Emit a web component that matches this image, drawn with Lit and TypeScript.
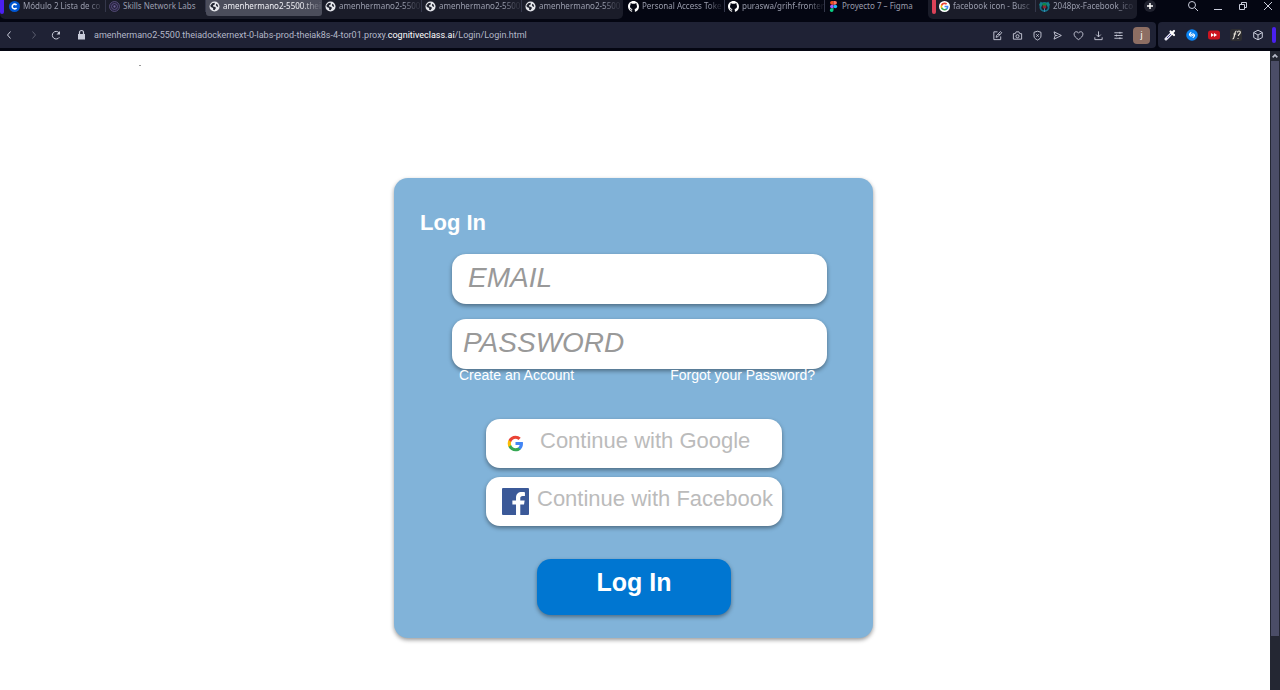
import { LitElement, html, css, svg, nothing } from "lit";
import { customElement, property } from "lit/decorators.js";

const googleG = svg`
  <path fill="#4285f4" d="M45.1 24.5c0-1.600-.2-3.100-.4-4.500H24v8.500h11.800c-.5 2.700-2 5-4.400 6.600v5.500h7.100c4.200-3.800 6.600-9.500 6.600-16.100z"/>
  <path fill="#34a853" d="M24 46c5.900 0 10.900-2 14.500-5.400l-7.100-5.500c-2 1.300-4.500 2.100-7.400 2.100-5.700 0-10.500-3.800-12.300-9H4.400v5.700C8 41.100 15.400 46 24 46z"/>
  <path fill="#fbbc05" d="M11.700 28.200A13.200 13.200 0 0 1 11 24c0-1.500.3-2.900.7-4.200v-5.700H4.400A22 22 0 0 0 2 24c0 3.600.9 6.900 2.400 9.900z"/>
  <path fill="#ea4335" d="M24 10.800c3.200 0 6.100 1.100 8.400 3.300l6.300-6.300C34.900 4.200 29.900 2 24 2 15.400 2 8 6.900 4.400 14.100l7.300 5.700c1.700-5.200 6.600-9 12.300-9z"/>`;

const icons: Record<string, { box: string; art: unknown }> = {
  coursera: {
    box: "0 0 24 24",
    art: svg`<circle cx="12" cy="12" r="12" fill="#0056d2"/><path d="M16.500 9a5.200 5.200 0 1 0 0 6" fill="none" stroke="#fff" stroke-width="3.400"/>`,
  },
  skills: {
    box: "0 0 24 24",
    art: svg`<circle cx="12" cy="12" r="10.800" fill="#24203c" stroke="#6d6296" stroke-width="1.500"/><circle cx="12" cy="12" r="6.500" fill="none" stroke="#5d5385" stroke-width="2"/><circle cx="12" cy="12" r="2.500" fill="#6d6296"/>`,
  },
  globe: {
    box: "0 0 24 24",
    art: svg`<circle cx="12" cy="12" r="11" fill="#e6e7ec"/><path fill="#20232f" d="M3 10l4-5 5-1 1 3-4 2 0 3 5 1 1 3-3 4-3-1 0-4-5-2z"/><path fill="#20232f" d="M16 6l3 2 1 5-3-1-2-3z"/>`,
  },
  github: {
    box: "0 0 16 16",
    art: svg`<path fill="#fff" d="M8 0C3.580 0 0 3.580 0 8c0 3.540 2.290 6.530 5.470 7.590.4.070.550-.170.550-.380v-1.490c-2.010.370-2.530-.490-2.690-.940-.090-.230-.480-.940-.820-1.130-.280-.150-.680-.520-.010-.530.630-.010 1.080.580 1.230.820.720 1.210 1.870.870 2.330.660.070-.520.280-.870.510-1.070-1.780-.2-3.640-.890-3.640-3.950 0-.870.310-1.590.820-2.150-.080-.2-.360-1.020.080-2.120 0 0 .670-.210 2.200.820a7.400 7.400 0 0 1 4 0c1.530-1.040 2.200-.820 2.200-.820.440 1.100.160 1.920.080 2.120.510.560.820 1.270.820 2.150 0 3.070-1.870 3.750-3.650 3.950.290.250.540.730.540 1.480v2.200c0 .210.150.460.550.380A8 8 0 0 0 16 8c0-4.420-3.580-8-8-8z"/>`,
  },
  figma: {
    box: "0 0 24 24",
    art: svg`<path fill="#f24e1e" d="M12 0H8.500a4 4 0 0 0 0 8H12z"/><path fill="#ff7262" d="M12 0h3.500a4 4 0 0 1 0 8H12z"/><path fill="#a259ff" d="M12 8H8.500a4 4 0 0 0 0 8H12z"/><circle cx="16" cy="12" r="4" fill="#1abcfe"/><path fill="#0acf83" d="M12 16H8.500a4 4 0 1 0 3.500 4z"/>`,
  },
  google: { box: "0 0 48 48", art: googleG },
  googleDisc: {
    box: "0 0 48 48",
    art: svg`<circle cx="24" cy="24" r="24" fill="#fff"/><g transform="translate(5 5) scale(.8)">${googleG}</g>`,
  },
  tulip: {
    box: "0 0 24 24",
    art: svg`<circle cx="12" cy="13" r="9" fill="none" stroke="#147087" stroke-width="4"/><path fill="#12808c" d="M4 1l5 5-5 8-4-6zM20 1l-5 5 5 8 4-6z"/><path fill="#15883e" d="M8 5h8v7H8z"/><circle cx="12" cy="13" r="4" fill="#8d2432"/><path stroke="#3c8bb5" stroke-width="2" d="M12 16v8"/>`,
  },
  plus: {
    box: "0 0 12 12",
    art: svg`<circle cx="6" cy="6" r="6" fill="#20222f"/><path d="M6 3v6M3 6h6" stroke="#fff" stroke-width="1.500"/>`,
  },
  search: { box: "0 0 12 12", art: svg`<g class="line"><circle cx="5" cy="5" r="3.500"/><path d="M7.600 7.600l3.400 3.400"/></g>` },
  minimize: { box: "0 0 12 12", art: svg`<path class="line" d="M2 9.500h8"/>` },
  restore: { box: "0 0 12 12", art: svg`<g class="line"><path d="M2.500 4.500h5v5h-5z"/><path d="M4.500 4.500v-2h5v5h-2"/></g>` },
  close: { box: "0 0 12 12", art: svg`<path class="line" d="M2 2l8 8M10 2l-8 8"/>` },
  back: { box: "0 0 12 12", art: svg`<path class="line" d="M6.500 2.500L3.500 6l3 3.500"/>` },
  forward: { box: "0 0 12 12", art: svg`<path class="line" opacity=".35" d="M5.500 2.500L8.500 6l-3 3.500"/>` },
  reload: { box: "0 0 12 12", art: svg`<path class="line" d="M9.300 8.300A3.800 3.800 0 1 1 9 3.700"/><path fill="currentColor" d="M10 2v3.500H6.500z"/>` },
  lock: { box: "0 0 12 12", art: svg`<path fill="currentColor" d="M2.500 5h7v5.500h-7z"/><path d="M4 5V3.500a2 2 0 0 1 4 0V5" fill="none" stroke="currentColor" stroke-width="1.200"/>` },
  edit: { box: "0 0 12 12", art: svg`<g class="line"><path d="M6 2H2v8.500h7.500V7"/><path d="M4.500 8l.5-2 4.300-4.300 1.300 1.300L6.300 7.400zM7 5h2"/></g>` },
  camera: { box: "0 0 12 12", art: svg`<g class="line"><path d="M1.500 4h2L4.500 2h3l1 2h2v6h-9z"/><circle cx="6" cy="6.800" r="1.700"/></g>` },
  shield: { box: "0 0 12 12", art: svg`<g class="line"><path d="M6 1.300l3.800 1.200v4C9.800 8.800 8 10 6 11 4 10 2.200 8.800 2.200 6.500v-4z"/><path d="M4.700 4.700l2.600 2.600M7.300 4.700L4.700 7.300"/></g>` },
  send: { box: "0 0 12 12", art: svg`<path class="line" d="M2.200 2l8 4-8 4 1.300-4zM3.500 6H6"/>` },
  heart: { box: "0 0 12 12", art: svg`<path class="line" d="M6 10.500C3 8.500 1.200 6.700 1.200 4.500 1.200 1.500 4.800 1 6 3.500 7.200 1 10.800 1.500 10.800 4.500 10.800 6.700 9 8.500 6 10.500z"/>` },
  download: { box: "0 0 12 12", art: svg`<path class="line" d="M6 1.500v6M3.500 5L6 7.500 8.500 5M2 8v2.500h8V8"/>` },
  sliders: { box: "0 0 12 12", art: svg`<path class="line" d="M1.500 3h9M1.500 6h9M1.500 9h9M7.500 2v2M3.800 5v2M7.500 8v2"/>` },
  picker: { box: "0 0 12 12", art: svg`<path d="M2 10l5.500-5.500" stroke="#e8e8f4" stroke-width="3" stroke-linecap="round"/><path d="M3 9l4-4" stroke="#4c4a94"/><path d="M6.500 2.500l3.500 3.500M8.500 3.500L10 2" stroke="#fff" stroke-width="2.200" stroke-linecap="round"/>` },
  shazam: { box: "0 0 12 12", art: svg`<circle cx="6" cy="6" r="5.800" fill="#0b84f3"/><path d="M5.500 7.500L4 6.500c-1.500-1 .2-2.500 1.300-3.300M6.500 4.500L8 5.500c1.500 1-.2 2.500-1.300 3.300M4.500 5l3 2" fill="none" stroke="#fff" stroke-width="1.100"/>` },
  skip: { box: "0 0 12 12", art: svg`<rect y="1.500" width="12" height="9" rx="2.500" fill="#cc1420"/><path fill="#fff" d="M3 4l3 2-3 2zM6 4l3 2-3 2z"/>` },
  fonts: { box: "0 0 12 12", art: svg`<rect width="12" height="12" rx="2" fill="#2e2e31"/><path d="M2.500 10c1.500 0 1.300-1 2-4s.8-4 2-4M3.500 5h2.700M7.500 3.500c0-2 3-2 2.800 0C10.200 5 8.500 5 8.300 7M8 9v.8" fill="none" stroke="#e9e5d8" stroke-width="1.200"/>` },
  cube: { box: "0 0 12 12", art: svg`<path class="line" d="M6 1.200l4.300 2.300v5L6 10.800 1.700 8.500v-5zM1.700 3.500L6 6l4.300-2.500M6 6v4.800"/>` },
  up: { box: "0 0 12 12", art: svg`<path d="M2.500 8L6 4.500 9.500 8" fill="none" stroke="currentColor" stroke-width="2.500"/>` },
  facebook: {
    box: "0 0 26 26",
    art: svg`<rect width="26" height="26" rx="1" fill="#3b5998"/><path fill="#fff" d="M13.500 26V16H10v-4h3.500V9.500c0-3.700 2.200-5.600 5.500-5.600 1.500 0 2.700.1 3.100.2v3.600h-2.200c-1.700 0-2.300.9-2.300 2.200V12h4.200l-.6 4h-3.600v10z"/>`,
  },
};

@customElement("ui-icon")
class UiIcon extends LitElement {
  @property() name = "";
  static styles = css`
    :host { display: block; flex: none; width: 12px; height: 12px; }
    svg { display: block; width: 100%; height: 100%; }
    .line { fill: none; stroke: currentColor; stroke-width: 1; }
  `;
  render() {
    const icon = icons[this.name];
    return icon ? html`<svg viewBox=${icon.box} aria-hidden="true">${icon.art}</svg>` : nothing;
  }
}

@customElement("browser-bar")
class BrowserBar extends LitElement {
  static styles = css`
    :host { display: block; background: #040612; color: #c9ccda; font: 9px/12px Roboto, "Open Sans", sans-serif; }
    button { display: flex; align-items: center; justify-content: center; padding: 0; border: 0; background: none; color: inherit; font: inherit; }
    .strip { display: flex; height: 22px; }
    .island { display: flex; height: 19px; border-radius: 0 0 5px 5px; }
    .island.filled { padding-right: 1px; background: #1a1c29; }
    .mark { width: 4px; height: 14px; margin-right: 2px; border-radius: 0 0 2px 2px; background: #4a20f0; }
    .mark.red { margin: 0 0 0 4px; background: #dc4258; }
    .tab { justify-content: flex-start; gap: 3px; width: 100px; height: 12px; padding: 0 1px 0 3px; border-right: 1px solid #34374a; color: #9a9dad; box-sizing: border-box; font: 8px/12px "Noto Sans", sans-serif; }
    .tab:last-child { border-color: transparent; }
    .tab.active { width: 116px; height: 16px; padding-bottom: 4px; border: 0; border-radius: 0 0 3px 3px; background: #4b4d5b; color: #f1f1f6; }
    .tab span { flex: 1; text-align: left; white-space: nowrap; }
    .tab .fade { mask-image: linear-gradient(to right, #000 80%, rgba(0, 0, 0, 0.2) 96%); }
    .tab ui-icon { width: 11px; height: 11px; }
    .middle { margin: 0 3px 0 2px; }
    .controls { display: flex; flex: 1; align-items: center; height: 12px; }
    .add { margin-left: 7px; }
    .window { display: flex; gap: 13px; margin-left: auto; padding-right: 6px; }
    .bar { display: flex; gap: 2px; height: 26px; padding-bottom: 3px; }
    .panel { display: flex; align-items: center; background: #1f2235; border-radius: 0 4px 4px 0; }
    .main { flex: 1; }
    .nav { display: flex; gap: 11px; margin-left: 4px; }
    .lock { margin-left: 13px; width: 13px; }
    .address { flex: 1; margin-left: 6px; color: #b4b8c8; white-space: nowrap; outline: none; }
    .address b { font-weight: 400; color: #fff; }
    .tools { display: flex; align-items: center; justify-content: space-between; width: 159px; padding-right: 6px; }
    .tools ui-icon { width: 11px; height: 11px; }
    .tools button { width: 12px; }
    .tools .avatar { width: 17px; height: 17px; border-radius: 4px; background: #8d6e63; color: #fff; }
    .extras { gap: 10px; padding-left: 6px; border-radius: 4px 0 0 4px; }
    .end { width: 4px; height: 16px; margin: 0 4px 0 -2px; border-radius: 2px; background: #4a20f0; }
  `;
  tab(icon: string, label: string, fade = true, active = false) {
    return html`<button class="tab ${active ? "active" : ""}"><ui-icon name=${icon}></ui-icon><span class=${fade ? "fade" : ""}>${label}</span></button>`;
  }
  tool(icon: string, label: string) {
    return html`<button aria-label=${label}><ui-icon name=${icon}></ui-icon></button>`;
  }
  render() {
    return html`
      <div class="strip">
        <div class="island filled">
          <div class="mark"></div>
          ${this.tab("coursera", "Módulo 2 Lista de co")}
          ${this.tab("skills", "Skills Network Labs", false)}
          ${this.tab("globe", "amenhermano2-5500.thei", true, true)}
          ${this.tab("globe", "amenhermano2-5500")}
          ${this.tab("globe", "amenhermano2-5500")}
          ${this.tab("globe", "amenhermano2-5500")}
        </div>
        <div class="island middle">
          ${this.tab("github", "Personal Access Toke")}
          ${this.tab("github", "puraswa/grihf-fronter")}
          ${this.tab("figma", "Proyecto 7 – Figma", false)}
        </div>
        <div class="island filled">
          <div class="mark red"></div>
          ${this.tab("googleDisc", "facebook icon - Busc")}
          ${this.tab("tulip", "2048px-Facebook_ico")}
        </div>
        <div class="controls">
          <button class="add" aria-label="New tab"><ui-icon name="plus"></ui-icon></button>
          <div class="window">
            ${this.tool("search", "Search tabs")} ${this.tool("minimize", "Minimize")}
            ${this.tool("restore", "Restore")} ${this.tool("close", "Close")}
          </div>
        </div>
      </div>
      <div class="bar">
        <div class="panel main">
          <div class="nav">${this.tool("back", "Back")} ${this.tool("forward", "Forward")} ${this.tool("reload", "Reload")}</div>
          <ui-icon class="lock" name="lock"></ui-icon>
          <div class="address" role="textbox" aria-label="Address" contenteditable="true">amenhermano2-5500.theiadockernext-0-labs-prod-theiak8s-4-tor01.proxy.<b>cognitiveclass.ai</b>/Login/Login.html</div>
          <div class="tools">
            ${this.tool("edit", "Edit page")} ${this.tool("camera", "Snapshot")} ${this.tool("shield", "Ad blocker")}
            ${this.tool("send", "Send")} ${this.tool("heart", "Favourites")} ${this.tool("download", "Downloads")}
            ${this.tool("sliders", "Easy setup")}
            <button class="avatar">j</button>
          </div>
        </div>
        <div class="panel extras">
          ${this.tool("picker", "Colour picker")} ${this.tool("shazam", "Shazam")} ${this.tool("skip", "Skip")}
          ${this.tool("fonts", "Fonts")} ${this.tool("cube", "Extensions")}
          <div class="end"></div>
        </div>
      </div>`;
  }
}

@customElement("login-card")
class LoginCard extends LitElement {
  static styles = css`
    :host { display: block; font-family: "Liberation Sans", Arial, sans-serif; }
    .card { display: flex; flex-direction: column; box-sizing: border-box; width: 479px; max-width: 100%; padding: 32px 46px 23px 26px; border-radius: 14px; background: #81b3d9; box-shadow: 0 2px 4px rgba(0, 0, 0, 0.4); }
    h1 { margin: 0 0 18px; color: #fff; font-size: 22px; line-height: 26px; }
    .fields { display: grid; gap: 15px; padding-left: 32px; }
    input { box-sizing: border-box; width: 100%; height: 50px; padding: 0 11px 2px; border: 0; border-radius: 14px; background: #fff; box-shadow: 0 2px 4px rgba(0, 0, 0, 0.4); color: #333; font: italic 28px/32px "Liberation Sans", Arial, sans-serif; }
    .email { padding-left: 16px; }
    input::placeholder { color: #999; opacity: 1; }
    .links { display: flex; justify-content: space-between; padding: 0 12px 0 39px; font-size: 14px; line-height: 12px; z-index: 1; }
    a { color: #fff; text-decoration: none; }
    .providers { display: grid; gap: 9px; width: 296px; margin: 38px 0 33px 66px; }
    button { border: 0; border-radius: 14px; box-shadow: 0 2px 4px rgba(0, 0, 0, 0.4); font-family: inherit; }
    .provider { display: flex; align-items: center; gap: 8px; height: 49px; padding: 0 8px 0 16px; background: #fff; color: #bbb; font-size: 22px; line-height: 26px; white-space: nowrap; }
    .provider span { padding-bottom: 6px; }
    .provider.wide { gap: 11px; }
    .logo { width: 27px; height: 27px; }
    .logo.small { width: 17px; height: 17px; padding: 5px; }
    .submit { width: 194px; height: 56px; margin-left: 117px; padding: 0 0 10px; background: #0076d1; color: #fff; font-size: 25px; font-weight: 700; line-height: 28px; }
  `;
  render() {
    return html`
      <form class="card" @submit=${(e: Event) => e.preventDefault()}>
        <h1>Log In</h1>
        <div class="fields">
          <input class="email" type="email" aria-label="Email" placeholder="EMAIL" />
          <input type="password" aria-label="Password" placeholder="PASSWORD" />
        </div>
        <div class="links"><a href="#create">Create an Account</a><a href="#forgot">Forgot your Password?</a></div>
        <div class="providers">
          <button type="button" class="provider wide"><ui-icon class="logo small" name="google"></ui-icon><span>Continue with Google</span></button>
          <button type="button" class="provider"><ui-icon class="logo" name="facebook"></ui-icon><span>Continue with Facebook</span></button>
        </div>
        <button class="submit">Log In</button>
      </form>`;
  }
}

@customElement("app-root")
class AppRoot extends LitElement {
  static styles = css`
    :host { display: flex; flex-direction: column; min-height: 100vh; background: #fff; }
    .view { display: flex; flex: 1; }
    .page { flex: 1; display: grid; grid-template-columns: 1fr auto 1fr; align-items: start; padding: 0 3px 24px 0; }
    .dot { width: 2px; height: 1px; margin: 14px 0 0 139px; background: #999; }
    .page login-card { margin-top: 127px; }
    .scroll { display: flex; flex-direction: column; width: 10px; background: #242733; color: #b9bccb; }
    .scroll ui-icon { width: 8px; height: 10px; margin: 0 1px; }
    .thumb { flex: 0 0 90%; margin: 0 1px; background: #4b4d67; }
  `;
  render() {
    return html`
      <browser-bar></browser-bar>
      <div class="view">
        <main class="page"><div class="dot"></div><login-card></login-card></main>
        <div class="scroll"><ui-icon name="up"></ui-icon><div class="thumb"></div></div>
      </div>`;
  }
}
